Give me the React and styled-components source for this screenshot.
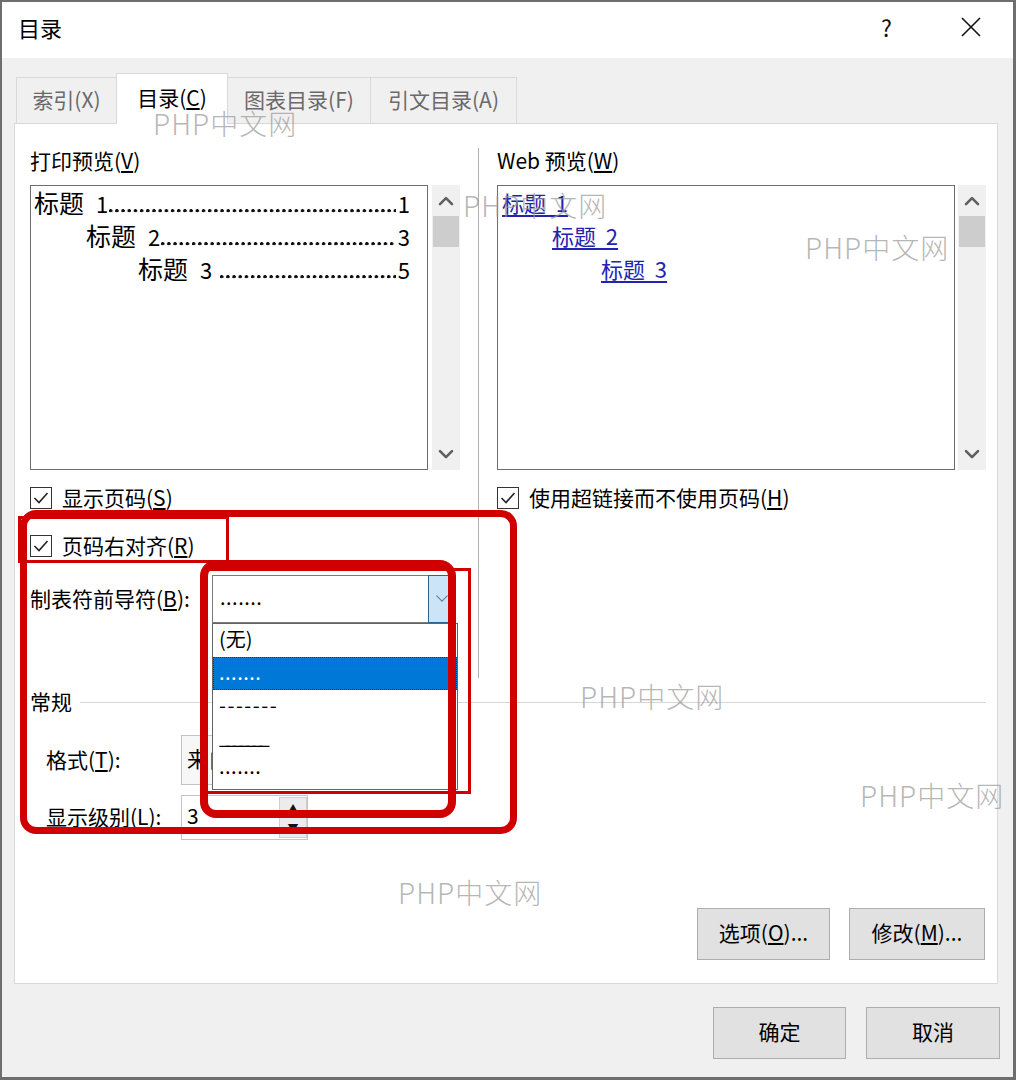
import React from 'react';
import styled, { createGlobalStyle } from 'styled-components';

const FONT = `"Noto Sans CJK SC", "Noto Sans", sans-serif`;

const GlobalStyle = createGlobalStyle`
  html, body { margin: 0; padding: 0; background: #ffffff; }
  body { font-family: ${FONT}; color: #000; }
  *, *::before, *::after { box-sizing: border-box; }
`;

const Window = styled.div`
  position: relative;
  width: 1016px;
  height: 1080px;
  border: 2px solid #6e6e6e;
  border-right-width: 3px;
  border-bottom-width: 3px;
  background: #f0f0f0;
  display: flex;
  flex-direction: column;
  overflow: hidden;
  font-family: ${FONT};
`;

const TitleBar = styled.div`
  height: 56px;
  flex: none;
  background: #ffffff;
  display: flex;
  align-items: center;
  padding: 0 31px 6px 16px;
`;

const Title = styled.div`
  flex: 1;
  font-size: 22px;
  line-height: 30px;
  color: #000;
`;

const HelpGlyph = styled.div`
  font-size: 23px;
  line-height: 30px;
  margin-right: 68px;
  color: #111;
`;

const Body = styled.div`
  flex: 1;
  display: flex;
  flex-direction: column;
  padding: 15px 15px 0 12px;
`;

const TabRow = styled.div`
  display: flex;
  align-items: flex-end;
  height: 50px;
  padding-left: 2px;
`;

const Tab = styled.div`
  position: relative;
  width: ${(p) => p.$w}px;
  height: ${(p) => (p.$active ? 51 : 46)}px;
  margin-bottom: ${(p) => (p.$active ? -1 : 0)}px;
  z-index: ${(p) => (p.$active ? 2 : 1)};
  display: flex;
  align-items: center;
  justify-content: center;
  font-size: 21px;
  color: ${(p) => (p.$active ? '#000' : '#6a6a6a')};
  background: ${(p) => (p.$active ? '#ffffff' : '#f0f0f0')};
  border: 1px solid #d9d9d9;
  border-bottom: none;
  margin-left: ${(p) => (p.$first ? 0 : -1)}px;
  padding-bottom: ${(p) => (p.$active ? 5 : 3)}px;
`;

const Key = styled.span`
  text-decoration: underline;
  text-underline-offset: 2px;
`;

const Panel = styled.div`
  height: 861px;
  flex: none;
  background: #ffffff;
  border: 1px solid #d9d9d9;
  padding: 24px 11px 0 15px;
  display: flex;
  flex-direction: column;
`;

const TopSection = styled.div`
  display: grid;
  grid-template-columns: 430px 1px 1fr;
  column-gap: 18px;
  height: 530px;
`;

const Column = styled.div`
  display: flex;
  flex-direction: column;
  position: relative;
`;

const Separator = styled.div`
  background: #b0b0b0;
  width: 1px;
  height: 100%;
`;

const Label = styled.div`
  font-size: 21px;
  line-height: 24px;
  height: 26px;
  white-space: nowrap;
`;

const PreviewRow = styled.div`
  display: flex;
  gap: ${(p) => p.$gap}px;
  height: 285px;
  margin-top: 11px;
`;

const PreviewBox = styled.div`
  flex: 1;
  border: 1px solid #6d6d6d;
  background: #ffffff;
  padding: ${(p) => p.$pad};
  overflow: hidden;
`;

const ScrollBar = styled.div`
  width: 28px;
  background: #f0f0f0;
  display: flex;
  flex-direction: column;
  align-items: center;
`;

const ScrollArrow = styled.div`
  height: ${(p) => p.$h}px;
  width: 100%;
  display: flex;
  align-items: center;
  justify-content: center;
`;

const ScrollThumb = styled.div`
  width: 26px;
  height: 31px;
  background: #cdcdcd;
`;

const ScrollSpace = styled.div`
  flex: 1;
`;

const TocLine = styled.div`
  display: flex;
  align-items: baseline;
  height: 33px;
  line-height: 27px;
  padding-left: ${(p) => p.$indent}px;
  font-size: 22px;
  white-space: nowrap;
`;

const TocTitle = styled.span`
  font-size: 25px;
  margin-right: 12px;
`;

const Leader = styled.span`
  flex: 1;
  align-self: stretch;
  margin-left: ${(p) => p.$gap || 1}px;
  margin-right: 2px;
  background-image: radial-gradient(circle at 1.7px 1.7px, #111 1.5px, transparent 1.9px);
  background-size: 6.2px 4px;
  background-repeat: repeat-x;
  background-position: 0 calc(100% - 9px);
`;

const WebLink = styled.a`
  display: block;
  height: 33px;
  line-height: 27px;
  padding-left: ${(p) => p.$indent}px;
  font-size: 22px;
  color: #2323b0;
  white-space: pre;
`;

const WebText = styled.span`
  text-decoration: underline;
  text-underline-offset: 3px;
`;

const CheckRow = styled.div`
  display: flex;
  align-items: center;
  gap: 10px;
  height: 22px;
  margin-top: ${(p) => p.$mt}px;
  font-size: 21px;
  line-height: 22px;
  white-space: nowrap;
`;

const CheckText = styled.span`
  margin-top: -3px;
`;

const CheckBox = styled.span`
  width: 22px;
  height: 22px;
  flex: none;
  border: 1px solid #333333;
  background: #ffffff;
  display: flex;
  align-items: center;
  justify-content: center;
`;

const LeaderRow = styled.div`
  display: flex;
  align-items: center;
  height: 48px;
  margin-top: 18px;
`;

const FieldLabel = styled.div`
  width: ${(p) => p.$w}px;
  flex: none;
  font-size: 21px;
  white-space: nowrap;
  margin-top: -3px;
`;

const Select = styled.div`
  position: relative;
  width: 244px;
  height: 48px;
  border: 1px solid #7a7a7a;
  background: #ffffff;
  display: flex;
`;

const SelectValue = styled.div`
  flex: 1;
  padding-left: 7px;
  font-size: 20px;
  line-height: 42px;
  letter-spacing: 0.5px;
`;

const DropButton = styled.div`
  width: 28px;
  margin: -1px -1px -1px 0;
  background: #cce4f7;
  border: 1px solid #2c628b;
  display: flex;
  align-items: center;
  justify-content: center;
`;

const DropList = styled.div`
  position: absolute;
  top: 47px;
  left: -1px;
  width: 246px;
  border: 1px solid #646464;
  background: #ffffff;
  z-index: 5;
`;

const ListItem = styled.div`
  height: 33px;
  padding-left: 6px;
  font-size: 20px;
  line-height: ${(p) => p.$lh || 30}px;
  white-space: nowrap;
  letter-spacing: ${(p) => p.$ls || 0}px;
  background: ${(p) => (p.$selected ? '#0078d7' : 'transparent')};
  color: ${(p) => (p.$selected ? '#ffffff' : '#000000')};
  outline: ${(p) => (p.$selected ? '1px dotted #0a3d75' : 'none')};
  outline-offset: -1px;
`;

const GroupHeader = styled.div`
  display: flex;
  align-items: center;
  gap: 8px;
  height: 24px;
  margin-top: 12px;
  font-size: 21px;
  line-height: 24px;
`;

const GroupText = styled.span`
  margin-top: -3px;
`;

const GroupLine = styled.div`
  flex: 1;
  height: 1px;
  background: #d7d7d7;
`;

const FieldRow = styled.div`
  display: flex;
  align-items: center;
  padding-left: 16px;
  height: ${(p) => p.$h}px;
  margin-top: ${(p) => p.$mt}px;
`;

const FormatSelect = styled.div`
  width: 160px;
  height: 50px;
  border: 1px solid #c4c4c4;
  background: #f7f7f7;
  padding-left: 5px;
  font-size: 21px;
  line-height: 44px;
  white-space: nowrap;
`;

const SpinBox = styled.div`
  width: 127px;
  height: 45px;
  border: 1px solid #c4c4c4;
  background: #ffffff;
  display: flex;
`;

const SpinValue = styled.div`
  flex: 1;
  padding-left: 5px;
  font-size: 21px;
  line-height: 38px;
`;

const SpinButtons = styled.div`
  width: 28px;
  display: flex;
  flex-direction: column;
  padding: 1px 0;
`;

const SpinButton = styled.div`
  flex: 1;
  display: flex;
  align-items: center;
  justify-content: center;
  background: #ececec;
  border: 1px solid #cfcfcf;
  margin-top: ${(p) => (p.$second ? -1 : 0)}px;
  font-size: 11px;
  color: #111;
`;

const ActionRow = styled.div`
  display: flex;
  justify-content: flex-end;
  gap: 19px;
  margin-top: 68px;
  padding-right: 1px;
`;

const Button = styled.button`
  width: ${(p) => p.$w}px;
  height: 52px;
  background: #e1e1e1;
  border: 1px solid #adadad;
  font-family: ${FONT};
  font-size: 21px;
  line-height: 24px;
  color: #000;
  padding: 0 0 5px;
`;

const Footer = styled.div`
  display: flex;
  justify-content: flex-end;
  gap: 20px;
  padding-top: 23px;
  margin-right: -2px;
`;

const Annotation = styled.div`
  position: absolute;
  left: ${(p) => p.$x - 2}px;
  top: ${(p) => p.$y - 2}px;
  width: ${(p) => p.$w}px;
  height: ${(p) => p.$h}px;
  border: ${(p) => p.$s}px solid #d00000;
  border-radius: ${(p) => p.$r || 0}px;
  z-index: 20;
  pointer-events: none;
`;

const Watermark = styled.div`
  position: absolute;
  left: ${(p) => p.$x - 2}px;
  top: ${(p) => p.$y - 21}px;
  font-size: 28px;
  line-height: 36px;
  font-weight: 300;
  letter-spacing: 1px;
  color: rgba(150, 150, 150, 0.7);
  white-space: nowrap;
  z-index: 15;
  pointer-events: none;
`;

const Chevron = ({ dir = 'up', color = '#5f5f5f', w = 16, sw = 2.6 }) => (
  <svg width={w} height={w * 0.7} viewBox="0 0 16 11">
    <polyline
      points={dir === 'up' ? '2,9 8,3 14,9' : '2,2 8,8 14,2'}
      fill="none"
      stroke={color}
      strokeWidth={sw}
      strokeLinecap="round"
      strokeLinejoin="round"
    />
  </svg>
);

const Check = () => (
  <svg width="16" height="14" viewBox="0 0 16 14">
    <polyline points="1.5,7 6,11.5 14.5,2" fill="none" stroke="#222" strokeWidth="1.6" />
  </svg>
);

const CloseIcon = () => (
  <svg width="22" height="22" viewBox="0 0 22 22">
    <path d="M2 2 L20 20 M20 2 L2 20" stroke="#111" strokeWidth="1.6" />
  </svg>
);

const Scroll = () => (
  <ScrollBar>
    <ScrollArrow $h={31}>
      <Chevron dir="up" />
    </ScrollArrow>
    <ScrollThumb />
    <ScrollSpace />
    <ScrollArrow $h={30}>
      <Chevron dir="down" />
    </ScrollArrow>
  </ScrollBar>
);

const tocRows = [
  { indent: 0, num: '1', page: '1', gap: 1 },
  { indent: 52, num: '2', page: '3', gap: 1 },
  { indent: 104, num: '3', page: '5', gap: 8 },
];

export default function App() {
  return (
    <>
      <GlobalStyle />
      <Window>
        <TitleBar>
          <Title>目录</Title>
          <HelpGlyph>?</HelpGlyph>
          <CloseIcon />
        </TitleBar>
        <Body>
          <TabRow>
            <Tab $w={101} $first>
              索引(X)
            </Tab>
            <Tab $w={112} $active>
              目录(<Key>C</Key>)
            </Tab>
            <Tab $w={144}>图表目录(F)</Tab>
            <Tab $w={147}>引文目录(A)</Tab>
          </TabRow>
          <Panel>
            <TopSection>
              <Column>
                <Label>
                  打印预览(<Key>V</Key>)
                </Label>
                <PreviewRow $gap={4}>
                  <PreviewBox $pad="3px 17px 0 3px">
                    {tocRows.map((r) => (
                      <TocLine key={r.num} $indent={r.indent}>
                        <TocTitle>标题</TocTitle>
                        <span>{r.num}</span>
                        <Leader $gap={r.gap} />
                        <span>{r.page}</span>
                      </TocLine>
                    ))}
                  </PreviewBox>
                  <Scroll />
                </PreviewRow>
                <CheckRow $mt={17}>
                  <CheckBox>
                    <Check />
                  </CheckBox>
                  <CheckText>
                    显示页码(<Key>S</Key>)
                  </CheckText>
                </CheckRow>
                <CheckRow $mt={26}>
                  <CheckBox>
                    <Check />
                  </CheckBox>
                  <CheckText>
                    页码右对齐(<Key>R</Key>)
                  </CheckText>
                </CheckRow>
                <LeaderRow>
                  <FieldLabel $w={182}>
                    制表符前导符(<Key>B</Key>):
                  </FieldLabel>
                  <Select>
                    <SelectValue>.......</SelectValue>
                    <DropButton>
                      <Chevron dir="down" color="#6b7f90" w={14} sw={1.4} />
                    </DropButton>
                    <DropList>
                      <ListItem>(无)</ListItem>
                      <ListItem $selected $ls={0.5}>
                        .......
                      </ListItem>
                      <ListItem $ls={1.5}>-------</ListItem>
                      <ListItem $ls={-4.6} $lh={26}>
                        _______
                      </ListItem>
                      <ListItem $ls={0.5} $lh={20}>
                        .......
                      </ListItem>
                    </DropList>
                  </Select>
                </LeaderRow>
              </Column>
              <Separator />
              <Column>
                <Label>
                  Web 预览(<Key>W</Key>)
                </Label>
                <PreviewRow $gap={3}>
                  <PreviewBox $pad="3px 10px 0 4px">
                    <WebLink $indent={0}>
                      <WebText>标题  1</WebText>
                    </WebLink>
                    <WebLink $indent={50}>
                      <WebText>标题  2</WebText>
                    </WebLink>
                    <WebLink $indent={99}>
                      <WebText>标题  3</WebText>
                    </WebLink>
                  </PreviewBox>
                  <Scroll />
                </PreviewRow>
                <CheckRow $mt={17}>
                  <CheckBox>
                    <Check />
                  </CheckBox>
                  <CheckText>
                    使用超链接而不使用页码(<Key>H</Key>)
                  </CheckText>
                </CheckRow>
              </Column>
            </TopSection>
            <GroupHeader>
              <GroupText>常规</GroupText>
              <GroupLine />
            </GroupHeader>
            <FieldRow $h={50} $mt={21}>
              <FieldLabel $w={135}>
                格式(<Key>T</Key>):
              </FieldLabel>
              <FormatSelect>来自模板</FormatSelect>
            </FieldRow>
            <FieldRow $h={45} $mt={10}>
              <FieldLabel $w={135}>
                显示级别(<Key>L</Key>):
              </FieldLabel>
              <SpinBox>
                <SpinValue>3</SpinValue>
                <SpinButtons>
                  <SpinButton>▲</SpinButton>
                  <SpinButton $second>▼</SpinButton>
                </SpinButtons>
              </SpinBox>
            </FieldRow>
            <ActionRow>
              <Button $w={133}>
                选项(<Key>O</Key>)...
              </Button>
              <Button $w={136}>
                修改(<Key>M</Key>)...
              </Button>
            </ActionRow>
          </Panel>
          <Footer>
            <Button $w={133}>确定</Button>
            <Button $w={134}>取消</Button>
          </Footer>
        </Body>

        <Annotation $x={18} $y={516} $w={211} $h={47} $s={3} />
        <Annotation $x={20} $y={510} $w={497} $h={324} $s={7} $r={16} />
        <Annotation $x={205} $y={568} $w={266} $h={226} $s={3} />
        <Annotation $x={200} $y={560} $w={256} $h={258} $s={8} $r={16} />

        <Watermark $x={153} $y={124}>PHP中文网</Watermark>
        <Watermark $x={463} $y={206}>PHP中文网</Watermark>
        <Watermark $x={805} $y={248}>PHP中文网</Watermark>
        <Watermark $x={580} $y={697}>PHP中文网</Watermark>
        <Watermark $x={860} $y={796}>PHP中文网</Watermark>
        <Watermark $x={398} $y={893}>PHP中文网</Watermark>
      </Window>
    </>
  );
}
